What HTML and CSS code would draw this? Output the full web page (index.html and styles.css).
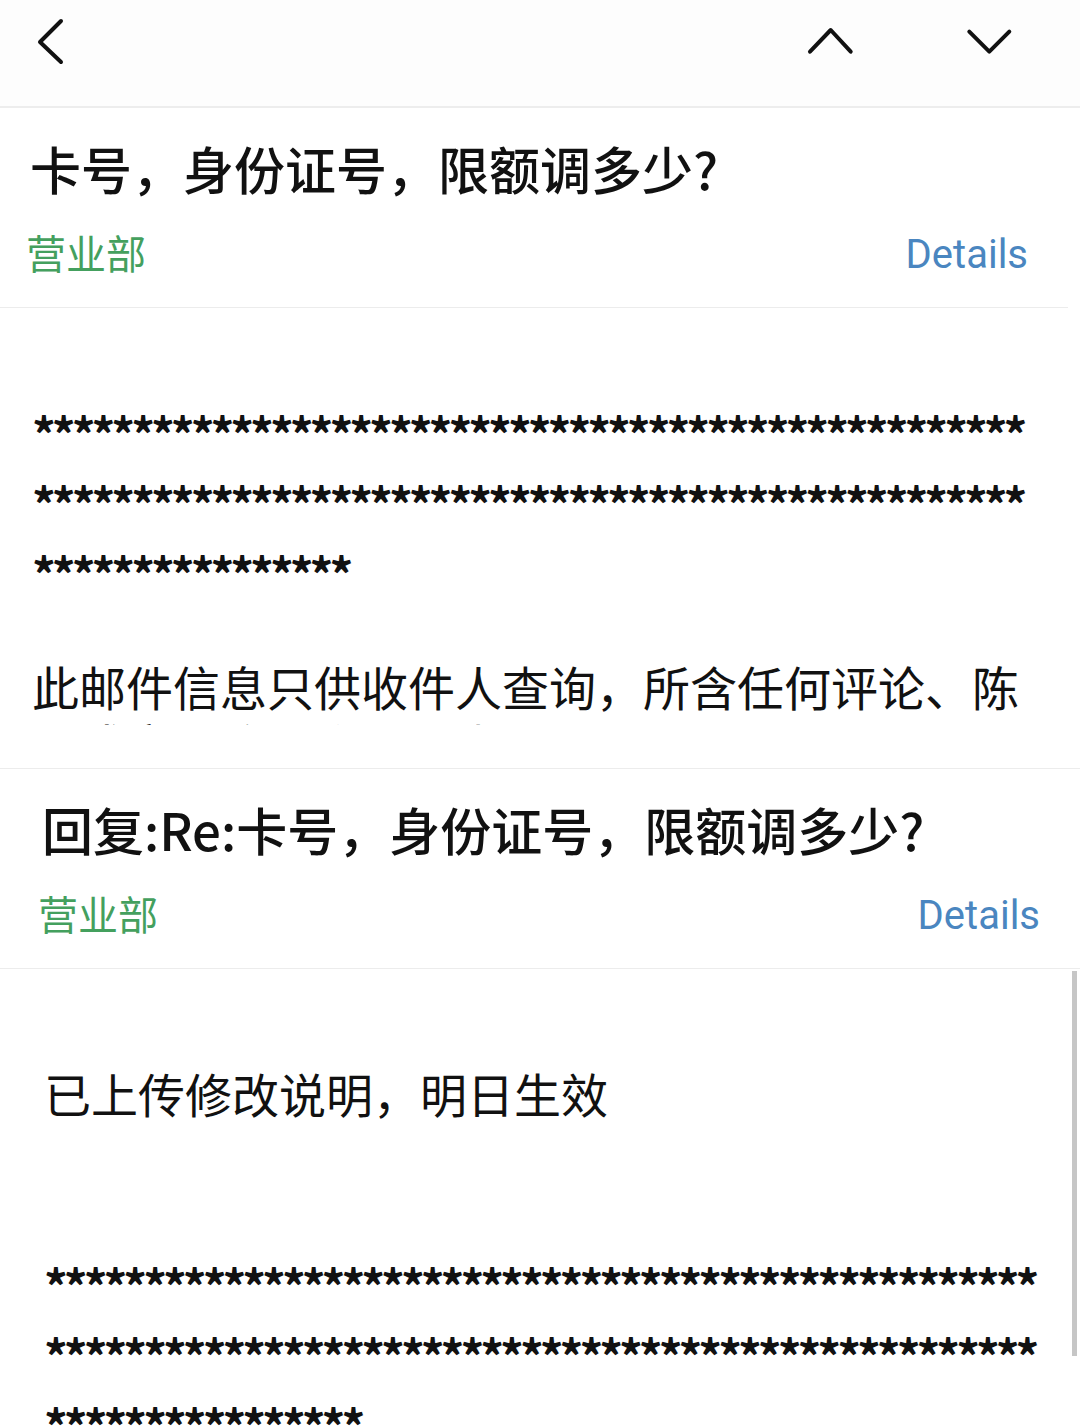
FILE: index.html
```html
<!DOCTYPE html>
<html>
<head>
<meta charset="utf-8">
<title>邮件</title>
<link rel="stylesheet" href="styles.css">
</head>
<body>
	<div class="topbar">
		<svg class="icon back" width="100" height="106" viewBox="0 0 100 106">
			<polyline points="61,21 40,42 61,62" />
		</svg>
		<div class="spacer"></div>
		<svg class="icon" width="100" height="106" viewBox="0 0 100 106">
			<polyline points="30,51.7 50.7,30 70.7,51.7" />
		</svg>
		<svg class="icon down" width="100" height="106" viewBox="0 0 100 106">
			<polyline points="29.3,31.7 49.3,51.7 69.3,31.7" />
		</svg>
	</div>

	<div class="mail">
		<div class="mail-head">
			<div class="subject">卡号，身份证号，限额调多少?</div>
			<div class="meta">
				<span class="sender">营业部</span>
				<span class="details">Details</span>
			</div>
		</div>
		<div class="mail-body first">
			<p class="stars">**************************************************<br>**************************************************<br>****************</p>
			<p class="text">此邮件信息只供收件人查询，所含任何评论、陈<br>述或意见均属个人观点</p>
		</div>
	</div>

	<div class="mail second">
		<div class="mail-head">
			<div class="subject">回复:Re:卡号，身份证号，限额调多少?</div>
			<div class="meta">
				<span class="sender">营业部</span>
				<span class="details">Details</span>
			</div>
		</div>
		<div class="mail-body">
			<p class="text">已上传修改说明，明日生效</p>
			<p class="stars">**************************************************<br>**************************************************<br>****************</p>
		</div>
		<div class="scrollbar"></div>
	</div>
</body>
</html>
```

FILE: styles.css
```css
html, body {
	margin: 0;
	padding: 0;
	background: #fff;
	overflow: hidden;
}
body {
	width: 1080px;
	height: 1428px;
	font-family: "Noto Sans CJK SC", "Noto Sans", sans-serif;
	color: #111;
	position: relative;
}
.topbar {
	display: flex;
	height: 106px;
	background: #fdfdfd;
	border-bottom: 2px solid #ededed;
}
.topbar .spacer {
	flex: 1;
}
.topbar .down {
	margin-left: 60px;
	margin-right: 40px;
}
.icon polyline {
	fill: none;
	stroke: #111;
	stroke-width: 4;
	stroke-linecap: round;
	stroke-linejoin: round;
}
.mail {
	position: relative;
	width: 1068px;
}
.mail.second {
	width: 1068px;
	padding-left: 12px;
	border-top: 1px solid #ececec;
}
.mail-head {
	height: 199px;
	padding: 0 40px 0 30px;
	border-bottom: 1px solid #ececec;
}
.second .mail-head {
	margin-left: -12px;
	padding-left: 42px;
}
.subject {
	font-size: 51px;
	line-height: 60px;
	padding-top: 30px;
	font-weight: 500;
	color: #111;
}
.meta {
	display: flex;
	justify-content: space-between;
	margin-top: 29px;
	font-size: 40px;
	line-height: 50px;
}
.sender {
	color: #44a05e;
	margin-left: -4px;
}
.details {
	font-family: Roboto, "Noto Sans", sans-serif;
	color: #4a86c0;
	padding-top: 3px;
}
.mail-body {
	padding: 0 32px;
}
.mail-body.first {
	height: 417px;
	overflow: hidden;
	margin-bottom: 43px;
}
.mail-body p {
	margin: 0;
}
.stars {
	font-size: 47px;
	line-height: 70px;
	font-weight: 700;
	letter-spacing: -4px;
}
.first .stars {
	padding-top: 90px;
}
.text {
	font-size: 47px;
	line-height: 58px;
}
.first .text {
	margin-top: 49px;
}
.second .text {
	padding-top: 95px;
}
.second .stars {
	margin-top: 128px;
}
.scrollbar {
	position: absolute;
	right: 3px;
	top: 202px;
	width: 5px;
	height: 385px;
	background: #c6c6c6;
}
```
